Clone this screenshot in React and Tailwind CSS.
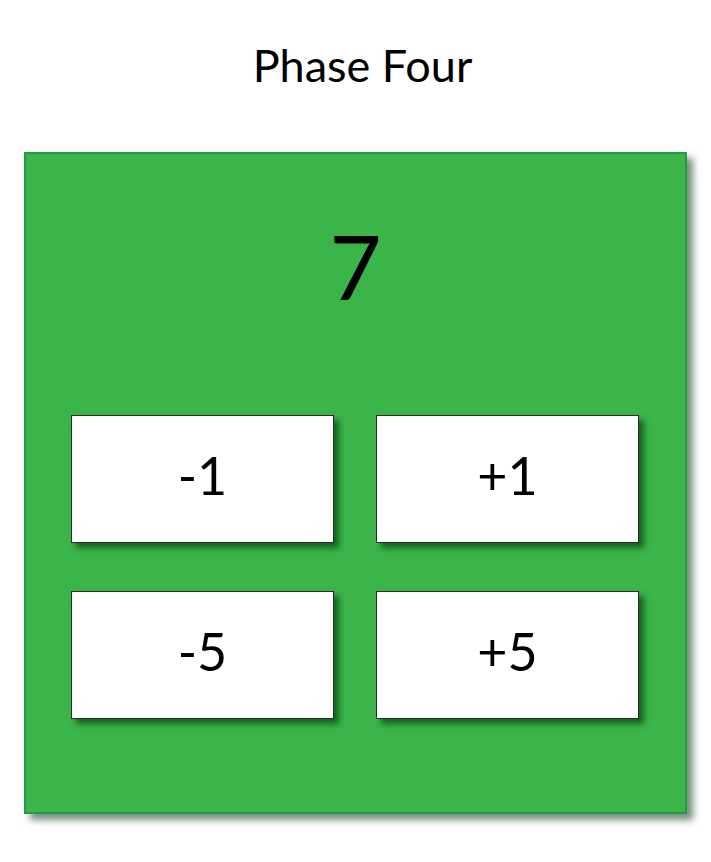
import React, { useState } from 'react';

const Btn = ({ label, onClick }) => (
  <button
    onClick={onClick}
    className="w-[263px] h-[128px] bg-white border border-[#2b2b2b] shadow-[5px_5px_6px_rgba(10,70,20,0.75)] flex items-center justify-center pb-[8px] text-[52px] text-black leading-none"
  >
    {label}
  </button>
);

const App = () => {
  const [count, setCount] = useState(7);

  return (
    <div className="w-[711px] h-[862px] bg-white font-['Lato',sans-serif] text-black">
      <div className="h-[152px] flex items-center justify-center pb-[22px] pl-[14px]">
        <h1 className="text-[45px] leading-none">Phase Four</h1>
      </div>

      <div className="ml-[24px] w-[663px] h-[662px] border-2 border-[#1e9c48] bg-[#3bb54a] shadow-[6px_6px_7px_rgba(10,50,20,0.55)]">
        <div className="h-[261px] flex items-center justify-center pb-[40px]">
          <span className="text-[90px] leading-none">{count}</span>
        </div>
        <div className="px-[45px] grid grid-cols-2 gap-x-[41px] gap-y-[48px]">
          <Btn label="-1" onClick={() => setCount(count - 1)} />
          <Btn label="+1" onClick={() => setCount(count + 1)} />
          <Btn label="-5" onClick={() => setCount(count - 5)} />
          <Btn label="+5" onClick={() => setCount(count + 5)} />
        </div>
      </div>
    </div>
  );
};

export default App;
